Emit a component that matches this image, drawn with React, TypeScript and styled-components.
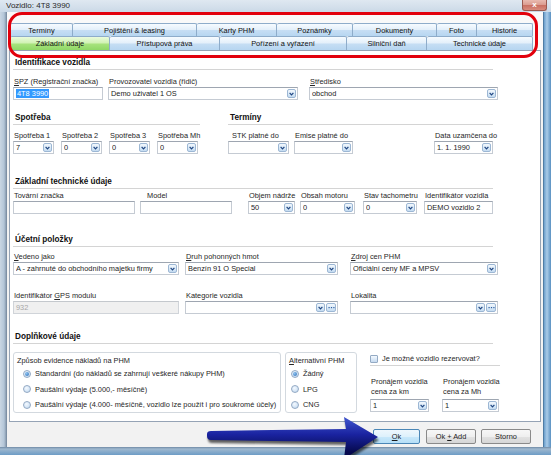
import styled, { createGlobalStyle } from "styled-components";

const GlobalStyle = createGlobalStyle`
  * { box-sizing: border-box; }
  html, body { margin: 0; padding: 0; background: #fff; }
`;

const Window = styled.div`
  position: relative;
  width: 551px;
  height: 455px;
  overflow: hidden;
  display: flex;
  flex-direction: column;
  font-family: "Liberation Sans", Arial, sans-serif;
  font-size: 7.4px;
  color: #1b1b1b;
  background: #c3d3e3;
`;

const TitleBar = styled.div`
  height: 12px;
  flex: none;
  display: flex;
  align-items: center;
  justify-content: space-between;
  padding: 0 4px 0 6px;
  background: linear-gradient(180deg, #dfe8f1, #cbd9e7);
`;

const Title = styled.span`
  font-size: 8px;
  line-height: 12px;
  color: #2a2a2a;
`;

const CloseBtn = styled.div`
  width: 25px;
  height: 12px;
  margin-top: -2px;
  border: 1px solid #9a5a50;
  border-top: none;
  border-radius: 0 0 3px 3px;
  background: linear-gradient(180deg, #ecc0b6 0%, #dc9e92 50%, #c86c5e 52%, #d88c7e 100%);
  color: #fff;
  font-size: 8px;
  font-weight: bold;
  display: flex;
  align-items: center;
  justify-content: center;
`;

const Middle = styled.div`
  flex: 1;
  display: flex;
  min-height: 0;
`;

const LeftFrame = styled.div`
  width: 7px;
  flex: none;
  background: linear-gradient(90deg, #c9d6e3 0, #b4c6d8 4px, #8b9db1 6px, #6f8298 7px);
`;

const RightFrame = styled.div`
  width: 8px;
  flex: none;
  background: linear-gradient(90deg, #33597d 0, #6b9fcc 1px, #a9cbe8 4px, #5a91c2 8px);
`;

const BottomFrame = styled.div`
  height: 8px;
  flex: none;
  background: linear-gradient(180deg, #6f8aa6 0, #9fb8cf 2px, #6d9cc6 8px);
`;

const Client = styled.div`
  flex: 1;
  display: flex;
  flex-direction: column;
  background: #f2f2f2;
`;

const TabStrip = styled.div`
  height: 38px;
  flex: none;
  padding: 11px 0 0 3px;
  background: #f9f9f9;
  display: flex;
  flex-direction: column;
`;

const TabRow = styled.div<{ $h: number }>`
  display: flex;
  height: ${p => p.$h}px;
`;

const Tab = styled.div<{ $w: number; $active?: boolean }>`
  width: ${p => p.$w}px;
  height: 100%;
  flex: none;
  display: flex;
  align-items: center;
  justify-content: center;
  white-space: nowrap;
  border-top: 1px solid #8eacca;
  border-right: 1px solid #8eacca;
  border-radius: 2px 2px 0 0;
  color: #111;
  background: ${p =>
    p.$active
      ? "linear-gradient(180deg, #eafbdd 0%, #cff1b2 48%, #a8e37e 52%, #8fd866 100%)"
      : "linear-gradient(180deg, #f6fbff 0%, #e3effa 48%, #c6def4 52%, #b7d6f1 100%)"};
  &:first-child {
    border-left: 1px solid #8eacca;
  }
`;

const Panel = styled.div`
  flex: 1;
  margin: 0 2px;
  background: #fff;
  border: 1px solid #95a3b5;
  padding: 0 0 0 3px;
  display: flex;
  flex-direction: column;
  align-items: flex-start;
`;

const Head = styled.div<{ $w: number; $mt?: number }>`
  width: ${p => p.$w}px;
  margin-top: ${p => p.$mt ?? 0}px;
  height: 14px;
  line-height: 13px;
  padding-left: 2px;
  font-size: 8.2px;
  font-weight: bold;
  color: #111;
  border-bottom: 1px solid #d4d4d4;
  flex: none;
`;

const Row = styled.div<{ $mt?: number }>`
  display: flex;
  align-items: flex-start;
  margin-top: ${p => p.$mt ?? 0}px;
`;

const Column = styled.div<{ $w: number; $ml?: number }>`
  width: ${p => p.$w}px;
  margin-left: ${p => p.$ml ?? 0}px;
  display: flex;
  flex-direction: column;
`;

const Field = styled.div<{ $w: number; $ml?: number }>`
  width: ${p => p.$w}px;
  margin-left: ${p => p.$ml ?? 0}px;
  flex: none;
  display: flex;
  flex-direction: column;
`;

const Label = styled.div<{ $pl?: number; $mb?: number }>`
  line-height: 10px;
  min-height: 10px;
  padding-left: ${p => p.$pl ?? 1}px;
  margin-bottom: ${p => p.$mb ?? 0}px;
  white-space: nowrap;
  color: #262626;
`;

const Box = styled.div<{ $disabled?: boolean }>`
  height: 13px;
  display: flex;
  align-items: center;
  padding-left: 2px;
  border: 1px solid ${p => (p.$disabled ? "#d0d4d9" : "#c5cbd3")};
  border-top-color: ${p => (p.$disabled ? "#c4c8cd" : "#9ea6b1")};
  background: ${p => (p.$disabled ? "#f0f0f0" : "#fff")};
  color: ${p => (p.$disabled ? "#a6a6a6" : "#1b1b1b")};
  white-space: nowrap;
  overflow: hidden;
`;

const Value = styled.span`
  flex: 1;
  overflow: hidden;
`;

const Selected = styled.span`
  background: #3399ff;
  color: #fff;
  padding: 0 1px;
`;

const SmallBtn = styled.div<{ $w: number }>`
  width: ${p => p.$w}px;
  height: 9px;
  flex: none;
  margin-right: 1px;
  border: 1px solid #9cb7d4;
  border-radius: 2px;
  background: linear-gradient(180deg, #f3f8fd 0%, #dcebf8 50%, #c4dbf1 100%);
  display: flex;
  align-items: center;
  justify-content: center;
`;

const Group = styled.div<{ $w: number; $ml?: number; $pl: number }>`
  width: ${p => p.$w}px;
  height: 61px;
  margin-left: ${p => p.$ml ?? 0}px;
  border: 1px solid #d3d9df;
  border-radius: 3px;
  padding: 3px 0 0 3px;
  flex: none;
  & > div + div {
    padding-left: ${p => p.$pl}px;
  }
`;

const GroupTitle = styled.div`
  line-height: 10px;
  white-space: nowrap;
  color: #262626;
`;

const Option = styled.div`
  height: 15.5px;
  display: flex;
  align-items: center;
  white-space: nowrap;
  color: #262626;
`;

const Radio = styled.span<{ $on?: boolean }>`
  width: 8px;
  height: 8px;
  flex: none;
  margin-right: 4px;
  border-radius: 50%;
  border: 1px solid #94aac4;
  background: radial-gradient(circle at 40% 35%, #f4f9fe 0%, #d4e5f6 60%, #b4cde8 100%);
  display: flex;
  align-items: center;
  justify-content: center;
  &::after {
    content: "";
    display: ${p => (p.$on ? "block" : "none")};
    width: 4px;
    height: 4px;
    border-radius: 50%;
    background: radial-gradient(circle at 35% 35%, #8fc3f0, #2a6db8);
  }
`;

const RightBlock = styled.div`
  width: 130px;
  margin-left: 13px;
  display: flex;
  flex-direction: column;
`;

const CheckRow = styled.div`
  height: 14px;
  display: flex;
  align-items: center;
  border-bottom: 1px solid #d4d4d4;
  white-space: nowrap;
  color: #262626;
`;

const Check = styled.span`
  width: 8px;
  height: 8px;
  flex: none;
  margin-right: 4px;
  border: 1px solid #94aac4;
  border-radius: 1px;
  background: linear-gradient(180deg, #f4f9fe, #c5daf0);
`;

const ButtonBar = styled.div`
  height: 25px;
  flex: none;
  display: flex;
  justify-content: flex-end;
  align-items: flex-start;
  padding: 7px 12px 0 0;
`;

const Button = styled.div<{ $w: number; $ml?: number; $default?: boolean }>`
  width: ${p => p.$w}px;
  height: 15px;
  margin-left: ${p => p.$ml ?? 0}px;
  display: flex;
  align-items: center;
  justify-content: center;
  border-radius: 2px;
  white-space: pre;
  color: #1b1b1b;
  border: 1px solid ${p => (p.$default ? "#4a86b6" : "#8a8a8a")};
  background: ${p =>
    p.$default
      ? "linear-gradient(180deg, #eef7fd 0%, #def1fc 50%, #c8e8fb 52%, #b6dff7 100%)"
      : "linear-gradient(180deg, #f7f7f7 0%, #efefef 50%, #e2e2e2 52%, #d6d6d6 100%)"};
`;

const Outline = styled.div`
  position: absolute;
  left: 8px;
  top: 12px;
  width: 530px;
  height: 46px;
  border: 3px solid #e2000c;
  border-radius: 14px;
  pointer-events: none;
`;

const ArrowSvg = styled.svg`
  position: absolute;
  left: 200px;
  top: 410px;
  pointer-events: none;
`;

const Chevron = () => (
  <svg width="5" height="4" viewBox="0 0 5 4">
    <path d="M0.6 0.8 L2.5 2.9 L4.4 0.8" fill="none" stroke="#1f4582" strokeWidth="1.2" />
  </svg>
);

const Dots = () => (
  <svg width="7" height="3" viewBox="0 0 7 3">
    <rect x="0.5" y="1" width="1.2" height="1.2" fill="#2d5da0" />
    <rect x="2.9" y="1" width="1.2" height="1.2" fill="#2d5da0" />
    <rect x="5.3" y="1" width="1.2" height="1.2" fill="#2d5da0" />
  </svg>
);

function Combo({ value, more }: { value?: string; more?: boolean }) {
  return (
    <Box>
      <Value>{value}</Value>
      <SmallBtn $w={9}>
        <Chevron />
      </SmallBtn>
      {more && (
        <SmallBtn $w={10}>
          <Dots />
        </SmallBtn>
      )}
    </Box>
  );
}

const row1 = [63, 124, 80, 76, 84, 40, 56];
const row1Names = ["Termíny", "Pojištění & leasing", "Karty PHM", "Poznámky", "Dokumenty", "Foto", "Historie"];
const row2 = [100, 110, 127, 80, 106];
const row2Names = ["Základní údaje", "Přístupová práva", "Pořízení a vyřazení", "Silniční daň", "Technické údaje"];

export default function App() {
  return (
    <>
      <GlobalStyle />
      <Window>
        <TitleBar>
          <Title>Vozidlo: 4T8 3990</Title>
          <CloseBtn>x</CloseBtn>
        </TitleBar>
        <Middle>
          <LeftFrame />
          <Client>
            <TabStrip>
              <TabRow $h={13}>
                {row1Names.map((n, i) => (
                  <Tab key={n} $w={row1[i]}>{n}</Tab>
                ))}
              </TabRow>
              <TabRow $h={14}>
                {row2Names.map((n, i) => (
                  <Tab key={n} $w={row2[i]} $active={i === 0}>{n}</Tab>
                ))}
              </TabRow>
            </TabStrip>

            <Panel>
              <Head $w={480} $mt={5}>Identifikace vozidla</Head>
              <Row $mt={7}>
                <Field $w={90}>
                  <Label><u>S</u>PZ (Registrační značka)</Label>
                  <Box><Selected>4T8 3990</Selected></Box>
                </Field>
                <Field $w={190} $ml={5}>
                  <Label>Provozovatel vozidla (řidič)</Label>
                  <Combo value="Demo uživatel 1 OS" />
                </Field>
                <Field $w={189} $ml={11}>
                  <Label><u>S</u>tředisko</Label>
                  <Combo value="obchod" />
                </Field>
              </Row>

              <Row $mt={11}>
                <Column $w={187}>
                  <Head $w={187}>Spotřeba</Head>
                  <Row $mt={6}>
                    <Field $w={41}>
                      <Label>Spotřeba 1</Label>
                      <Combo value="7" />
                    </Field>
                    <Field $w={41} $ml={7}>
                      <Label>Spotřeba 2</Label>
                      <Combo value="0" />
                    </Field>
                    <Field $w={41} $ml={7}>
                      <Label>Spotřeba 3</Label>
                      <Combo value="0" />
                    </Field>
                    <Field $w={41} $ml={7}>
                      <Label>Spotřeba Mh</Label>
                      <Combo value="0" />
                    </Field>
                  </Row>
                </Column>
                <Column $w={265} $ml={28}>
                  <Head $w={265}>Termíny</Head>
                  <Row $mt={6}>
                    <Field $w={61}>
                      <Label $pl={4}>STK platné do</Label>
                      <Combo />
                    </Field>
                    <Field $w={59} $ml={5}>
                      <Label>Emise platné do</Label>
                      <Combo />
                    </Field>
                    <Field $w={59} $ml={81}>
                      <Label>Data uzamčena do</Label>
                      <Combo value="1. 1. 1990" />
                    </Field>
                  </Row>
                </Column>
              </Row>

              <Head $w={480} $mt={21}>Základní technické údaje</Head>
              <Row $mt={2}>
                <Field $w={122}>
                  <Label>Tovární značka</Label>
                  <Box />
                </Field>
                <Field $w={92} $ml={5}>
                  <Label $pl={7}>Model</Label>
                  <Box />
                </Field>
                <Field $w={47} $ml={16}>
                  <Label>Objem nádrže</Label>
                  <Combo value="50" />
                </Field>
                <Field $w={55} $ml={5}>
                  <Label>Obsah motoru</Label>
                  <Combo value="0" />
                </Field>
                <Field $w={54} $ml={8}>
                  <Label>Stav tachometru</Label>
                  <Combo value="0" />
                </Field>
                <Field $w={69} $ml={7}>
                  <Label>Identifikátor vozidla</Label>
                  <Box>DEMO vozidlo 2</Box>
                </Field>
              </Row>

              <Head $w={480} $mt={19}>Účetní položky</Head>
              <Row $mt={5}>
                <Field $w={166}>
                  <Label><u>V</u>edeno jako</Label>
                  <Combo value="A - zahrnuté do obchodního majetku firmy" />
                </Field>
                <Field $w={153} $ml={6}>
                  <Label><u>D</u>ruh pohonných hmot</Label>
                  <Combo value="Benzín 91 O Special" />
                </Field>
                <Field $w={148} $ml={12}>
                  <Label><u>Z</u>droj cen PHM</Label>
                  <Combo value="Oficiální ceny MF a MPSV" />
                </Field>
              </Row>
              <Row $mt={16}>
                <Field $w={166}>
                  <Label>Identifikátor <u>G</u>PS modulu</Label>
                  <Box $disabled>932</Box>
                </Field>
                <Field $w={153} $ml={6}>
                  <Label>Kategorie vozidla</Label>
                  <Combo more />
                </Field>
                <Field $w={148} $ml={12}>
                  <Label>Lokalita</Label>
                  <Combo more />
                </Field>
              </Row>

              <Head $w={480} $mt={16}>Doplňkové údaje</Head>
              <Row $mt={8}>
                <Group $w={268} $pl={6}>
                  <GroupTitle>Způsob evidence nákladů na PHM</GroupTitle>
                  <Option><Radio $on />Standardní (do nákladů se zahrnují veškeré nákupy PHM)</Option>
                  <Option><Radio />Paušální výdaje (5.000,- měsíčně)</Option>
                  <Option><Radio />Paušální výdaje (4.000- měsíčně, vozidlo lze použít i pro soukromé účely)</Option>
                </Group>
                <Group $w={72} $ml={4} $pl={2}>
                  <GroupTitle><u>A</u>lternativní PHM</GroupTitle>
                  <Option><Radio $on />Žádný</Option>
                  <Option><Radio />LPG</Option>
                  <Option><Radio />CNG</Option>
                </Group>
                <RightBlock>
                  <CheckRow><Check />Je možné vozidlo rezervovat?</CheckRow>
                  <Row $mt={11}>
                    <Field $w={59}>
                      <Label $mb={2}>Pronájem vozidla<br />cena za km</Label>
                      <Combo value="1" />
                    </Field>
                    <Field $w={57} $ml={13}>
                      <Label $mb={2}>Pronájem vozidla<br />cena za Mh</Label>
                      <Combo value="1" />
                    </Field>
                  </Row>
                </RightBlock>
              </Row>
            </Panel>

            <ButtonBar>
              <Button $w={47} $default><span><u>O</u>k</span></Button>
              <Button $w={50} $ml={6}><span>Ok <u>+</u> Add</span></Button>
              <Button $w={50} $ml={5}><span>Storno</span></Button>
            </ButtonBar>
          </Client>
          <RightFrame />
        </Middle>
        <BottomFrame />

        <Outline />
        <ArrowSvg width="185" height="45" viewBox="200 410 185 45">
          <defs>
            <linearGradient id="arrowFill" gradientUnits="userSpaceOnUse" x1="0" y1="420" x2="0" y2="452">
              <stop offset="0" stopColor="#3a4fc8" />
              <stop offset="0.45" stopColor="#1a23a0" />
              <stop offset="1" stopColor="#060a4e" />
            </linearGradient>
            <filter id="arrowShadow" x="-10%" y="-30%" width="120%" height="160%">
              <feGaussianBlur stdDeviation="1.2" />
            </filter>
          </defs>
          <path
            d="M207 434 Q207 431 211 431 L346 429 L344 417 L378 437 L344 459 L346 442 L211 440 Q207 440 207 436 Z"
            fill="#000"
            opacity="0.6"
            transform="translate(1 3)"
            filter="url(#arrowShadow)"
          />
          <path
            d="M207 434 Q207 431 211 431 L346 429 L344 417 L378 437 L344 459 L346 442 L211 440 Q207 440 207 436 Z"
            fill="url(#arrowFill)"
          />
        </ArrowSvg>
      </Window>
    </>
  );
}
